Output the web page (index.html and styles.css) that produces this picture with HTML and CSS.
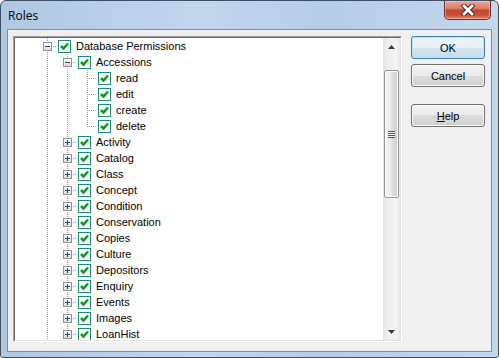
FILE: index.html
```html
<!DOCTYPE html>
<html>
<head>
    <title>Roles</title>
    <link rel="stylesheet" href="styles.css">
</head>
<body>
    <svg class="defs" width="0" height="0">
        <symbol id="ck" viewBox="0 0 11 11">
            <polyline points="2,5 4.5,7.5 9,2.5" fill="none" stroke="#159a15" stroke-width="2.6"/>
        </symbol>
    </svg>
    <div class="window">
        <div class="titlebar">
            <span class="title">Roles</span>
            <div class="close">
                <svg width="14" height="12" viewBox="0 0 14 12">
                    <path d="M3 2 L11 10 M11 2 L3 10" stroke="#4a2520" stroke-width="4.6" stroke-linecap="square"/>
                    <path d="M3 2 L11 10 M11 2 L3 10" stroke="#fff" stroke-width="2.8" stroke-linecap="square"/>
                </svg>
            </div>
        </div>
        <div class="client">
            <div class="tree">
                <div class="tree-in">
                    <div class="list">
                        <div class="row"><span class="ind tee"><i class="exp minus"></i></span><span class="chk"><svg><use href="#ck"/></svg></span><span class="lbl">Database Permissions</span></div>
                        <div class="row"><span class="ind pipe"></span><span class="ind tee"><i class="exp minus"></i></span><span class="chk"><svg><use href="#ck"/></svg></span><span class="lbl">Accessions</span></div>
                        <div class="row"><span class="ind pipe"></span><span class="ind pipe"></span><span class="ind tee"></span><span class="chk"><svg><use href="#ck"/></svg></span><span class="lbl">read</span></div>
                        <div class="row"><span class="ind pipe"></span><span class="ind pipe"></span><span class="ind tee"></span><span class="chk"><svg><use href="#ck"/></svg></span><span class="lbl">edit</span></div>
                        <div class="row"><span class="ind pipe"></span><span class="ind pipe"></span><span class="ind tee"></span><span class="chk"><svg><use href="#ck"/></svg></span><span class="lbl">create</span></div>
                        <div class="row"><span class="ind pipe"></span><span class="ind pipe"></span><span class="ind ell"></span><span class="chk"><svg><use href="#ck"/></svg></span><span class="lbl">delete</span></div>
                        <div class="row"><span class="ind pipe"></span><span class="ind tee"><i class="exp plus"></i></span><span class="chk"><svg><use href="#ck"/></svg></span><span class="lbl">Activity</span></div>
                        <div class="row"><span class="ind pipe"></span><span class="ind tee"><i class="exp plus"></i></span><span class="chk"><svg><use href="#ck"/></svg></span><span class="lbl">Catalog</span></div>
                        <div class="row"><span class="ind pipe"></span><span class="ind tee"><i class="exp plus"></i></span><span class="chk"><svg><use href="#ck"/></svg></span><span class="lbl">Class</span></div>
                        <div class="row"><span class="ind pipe"></span><span class="ind tee"><i class="exp plus"></i></span><span class="chk"><svg><use href="#ck"/></svg></span><span class="lbl">Concept</span></div>
                        <div class="row"><span class="ind pipe"></span><span class="ind tee"><i class="exp plus"></i></span><span class="chk"><svg><use href="#ck"/></svg></span><span class="lbl">Condition</span></div>
                        <div class="row"><span class="ind pipe"></span><span class="ind tee"><i class="exp plus"></i></span><span class="chk"><svg><use href="#ck"/></svg></span><span class="lbl">Conservation</span></div>
                        <div class="row"><span class="ind pipe"></span><span class="ind tee"><i class="exp plus"></i></span><span class="chk"><svg><use href="#ck"/></svg></span><span class="lbl">Copies</span></div>
                        <div class="row"><span class="ind pipe"></span><span class="ind tee"><i class="exp plus"></i></span><span class="chk"><svg><use href="#ck"/></svg></span><span class="lbl">Culture</span></div>
                        <div class="row"><span class="ind pipe"></span><span class="ind tee"><i class="exp plus"></i></span><span class="chk"><svg><use href="#ck"/></svg></span><span class="lbl">Depositors</span></div>
                        <div class="row"><span class="ind pipe"></span><span class="ind tee"><i class="exp plus"></i></span><span class="chk"><svg><use href="#ck"/></svg></span><span class="lbl">Enquiry</span></div>
                        <div class="row"><span class="ind pipe"></span><span class="ind tee"><i class="exp plus"></i></span><span class="chk"><svg><use href="#ck"/></svg></span><span class="lbl">Events</span></div>
                        <div class="row"><span class="ind pipe"></span><span class="ind tee"><i class="exp plus"></i></span><span class="chk"><svg><use href="#ck"/></svg></span><span class="lbl">Images</span></div>
                        <div class="row"><span class="ind pipe"></span><span class="ind tee"><i class="exp plus"></i></span><span class="chk"><svg><use href="#ck"/></svg></span><span class="lbl">LoanHist</span></div>
                    </div>
                    <div class="scrollbar">
                        <div class="arrow"><svg width="7" height="4"><polygon points="0,4 3.5,0 7,4" fill="#3c3c3c"/></svg></div>
                        <div class="track">
                            <div class="thumb"><div class="grip"></div></div>
                        </div>
                        <div class="arrow"><svg width="7" height="4"><polygon points="0,0 3.5,4 7,0" fill="#3c3c3c"/></svg></div>
                    </div>
                </div>
            </div>
            <div class="buttons">
                <div class="btn default">OK</div>
                <div class="btn cancel">Cancel</div>
                <div class="btn help"><u>H</u>elp</div>
            </div>
        </div>
    </div>
</body>
</html>
```

FILE: styles.css
```css
body {
    margin: 0;
    font-family: "Liberation Sans", Arial, sans-serif;
    font-size: 11px;
    color: #000;
    background: #fff;
}
.defs {
    position: absolute;
}
.window {
    width: 499px;
    height: 358px;
    box-sizing: border-box;
    border: 1px solid #3e4d60;
    border-radius: 6px 6px 3px 3px;
    background: linear-gradient(to right, #afc8e3, #c2d6ed 40%, #b6cde7 65%, #c3d7ee);
    padding: 0 6px 5px;
    display: flex;
    flex-direction: column;
    overflow: hidden;
}
.titlebar {
    height: 28px;
    display: flex;
    align-items: flex-start;
}
.title {
    font-family: "Open Sans", "Noto Sans", sans-serif;
    font-size: 12px;
    margin: 6px 0 0 1px;
}
.close {
    margin-left: auto;
    margin-right: 1px;
    width: 47px;
    height: 19px;
    box-sizing: border-box;
    border: 1px solid #6b2d25;
    border-top: none;
    border-radius: 0 0 5px 5px;
    background: linear-gradient(#e7a597, #d9826f 40%, #c4462f 52%, #c9553c 80%, #dd8b6c);
    box-shadow: inset 0 0 0 1px rgba(255, 220, 210, 0.45);
    display: flex;
    align-items: center;
    justify-content: center;
}
.client {
    flex: 1;
    border: 1px solid #7c8ea5;
    background: #f0f0f0;
    display: flex;
    padding: 6px 6px 9px 5px;
    gap: 9px;
}
.tree {
    width: 389px;
    height: 306px;
    box-sizing: border-box;
    border: 1px solid;
    border-color: #a0a0a0 #fff #fff #a0a0a0;
}
.tree-in {
    height: 100%;
    box-sizing: border-box;
    border: 1px solid;
    border-color: #696969 #e3e3e3 #e3e3e3 #696969;
    background: #fff;
    display: flex;
}
.list {
    flex: 1;
    overflow: hidden;
    padding-left: 22px;
}
.row {
    height: 16px;
    display: flex;
    align-items: center;
    white-space: nowrap;
}
.ind {
    width: 20px;
    height: 16px;
    flex: none;
}
.pipe {
    background: repeating-linear-gradient(#a0a0a0 0 1px, transparent 1px 2px) 10px 0 / 1px 16px no-repeat;
}
.tee {
    background:
        repeating-linear-gradient(to right, #a0a0a0 0 1px, transparent 1px 2px) 12px 8px / 8px 1px no-repeat,
        repeating-linear-gradient(#a0a0a0 0 1px, transparent 1px 2px) 10px 0 / 1px 16px no-repeat;
}
.ell {
    background:
        repeating-linear-gradient(to right, #a0a0a0 0 1px, transparent 1px 2px) 12px 8px / 8px 1px no-repeat,
        repeating-linear-gradient(#a0a0a0 0 1px, transparent 1px 2px) 10px 0 / 1px 9px no-repeat;
}
.exp {
    display: block;
    width: 9px;
    height: 9px;
    box-sizing: border-box;
    margin: 4px 0 0 6px;
    border: 1px solid #919191;
}
.minus {
    background:
        linear-gradient(#23418f, #23418f) 1px 3px / 5px 1px no-repeat,
        linear-gradient(#fff, #f4f4f4 40%, #d8d8d8);
}
.plus {
    background:
        linear-gradient(#23418f, #23418f) 1px 3px / 5px 1px no-repeat,
        linear-gradient(#23418f, #23418f) 3px 1px / 1px 5px no-repeat,
        linear-gradient(#fff, #f4f4f4 40%, #d8d8d8);
}
.chk {
    width: 13px;
    height: 13px;
    box-sizing: border-box;
    margin-left: 1px;
    border: 1px solid #1a8a80;
    background: #fff;
    flex: none;
}
.chk svg {
    display: block;
    width: 11px;
    height: 11px;
}
.lbl {
    margin-left: 5px;
    line-height: 16px;
}
.scrollbar {
    width: 17px;
    flex: none;
    display: flex;
    flex-direction: column;
    background: linear-gradient(to right, #e4e4e4, #eeeeee 25%, #f4f4f4 75%, #e8e8e8);
}
.arrow {
    height: 17px;
    display: flex;
    align-items: center;
    justify-content: center;
    flex: none;
}
.track {
    flex: 1;
    padding-top: 15px;
}
.thumb {
    height: 128px;
    box-sizing: border-box;
    margin: 0 1px;
    border: 1px solid #979797;
    border-radius: 2px;
    background: linear-gradient(to right, #f4f4f4, #ececec 45%, #dcdcdc 55%, #d0d0d0);
    box-shadow: inset 0 0 0 1px #fbfbfb;
    display: flex;
    align-items: center;
    justify-content: center;
}
.grip {
    width: 7px;
    height: 7px;
    background: repeating-linear-gradient(#555 0 1px, #f6f6f6 1px 2px);
}
.buttons {
    width: 74px;
    display: flex;
    flex-direction: column;
}
.btn {
    height: 23px;
    box-sizing: border-box;
    border: 1px solid #707070;
    border-radius: 3px;
    background: linear-gradient(#f2f2f2, #ebebeb 50%, #dddddd 50%, #cfcfcf);
    box-shadow: inset 0 0 0 1px #fcfcfc;
    display: flex;
    align-items: center;
    justify-content: center;
}
.default {
    border-color: #3c7fb1;
    background: linear-gradient(#eef6fb, #e4eff7 50%, #d4e5f0 50%, #c8dcea);
    box-shadow: inset 0 0 0 1px #bfe4f7;
}
.cancel {
    margin-top: 5px;
}
.help {
    margin-top: 17px;
}
```
